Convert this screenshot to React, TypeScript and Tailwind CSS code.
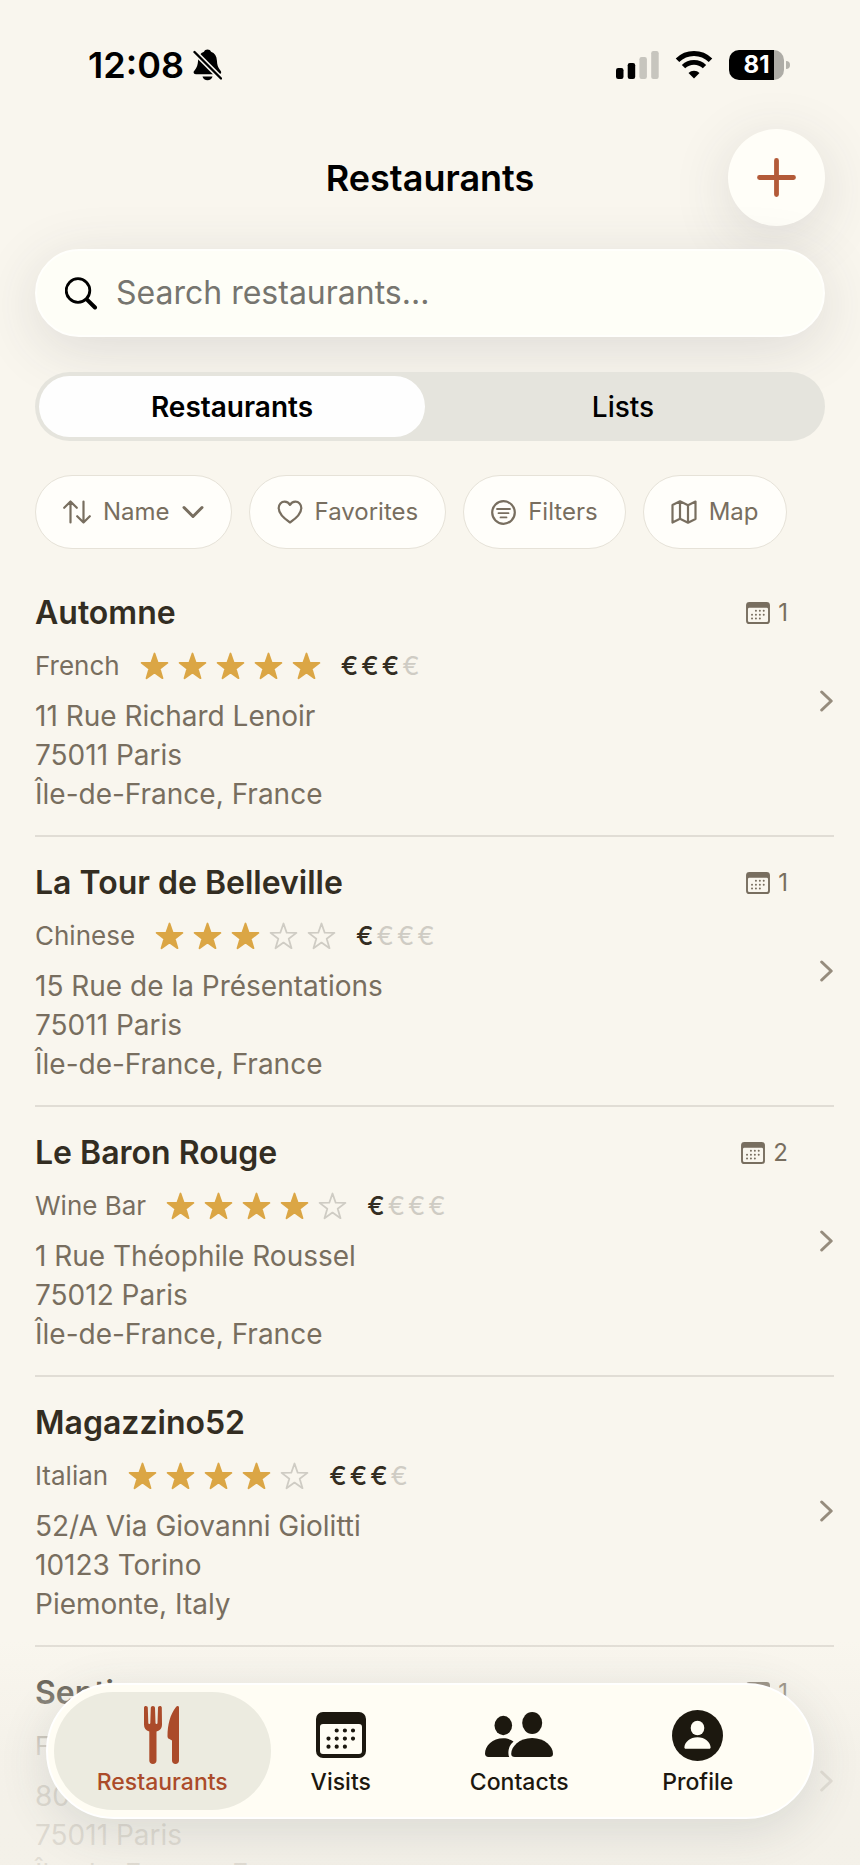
import React, { useState } from 'react'

interface Restaurant {
  name: string
  cuisine: string
  rating: number
  price: number
  address: string[]
  visits?: number
}

const restaurants: Restaurant[] = [
  {
    name: 'Automne',
    cuisine: 'French',
    rating: 5,
    price: 3,
    address: ['11 Rue Richard Lenoir', '75011 Paris', 'Île-de-France, France'],
    visits: 1,
  },
  {
    name: 'La Tour de Belleville',
    cuisine: 'Chinese',
    rating: 3,
    price: 1,
    address: ['15 Rue de la Présentations', '75011 Paris', 'Île-de-France, France'],
    visits: 1,
  },
  {
    name: 'Le Baron Rouge',
    cuisine: 'Wine Bar',
    rating: 4,
    price: 1,
    address: ['1 Rue Théophile Roussel', '75012 Paris', 'Île-de-France, France'],
    visits: 2,
  },
  {
    name: 'Magazzino52',
    cuisine: 'Italian',
    rating: 4,
    price: 3,
    address: ['52/A Via Giovanni Giolitti', '10123 Torino', 'Piemonte, Italy'],
  },
  {
    name: 'Senti',
    cuisine: 'French',
    rating: 4,
    price: 2,
    address: ['80', '75011 Paris', 'Île-de-France, France'],
    visits: 1,
  },
]

/* ---------- icons ---------- */

function BellSlashIcon() {
  return (
    <svg width="29" height="32" viewBox="0 0 29 32" aria-hidden="true">
      <path
        d="M14.5 0.500c1.600 0 3 .9 3.500 2.300 3.800 1.300 5.700 4.500 5.900 8.700.2 4.600 1.100 7.100 3.100 9.400.9 1.100 1.200 1.700 1.200 2.400 0 1.200-.9 2-2.300 2H3c-1.500 0-2.400-.8-2.400-2 0-.8.4-1.400 1.300-2.400 2-2.300 2.900-4.800 3.200-9.400.2-4.200 2.100-7.400 5.900-8.700C11.500 1.400 12.900.5 14.500.5Z"
        fill="#000"
      />
      <path d="M9.500 27.500h10c-.5 2.300-2.500 3.800-5 3.800s-4.500-1.500-5-3.800Z" fill="#000" />
      <path d="M1.500 3 28 29.500" stroke="#f9f6ee" strokeWidth="5.400" />
      <path d="M1.500 3 28 29.500" stroke="#000" strokeWidth="2.400" strokeLinecap="round" />
    </svg>
  )
}

function SignalIcon() {
  return (
    <svg width="43" height="28" viewBox="0 0 43 28" aria-hidden="true">
      <rect x="0" y="17" width="7.500" height="11" rx="2.200" fill="#000" />
      <rect x="11.700" y="12" width="7.500" height="16" rx="2.200" fill="#000" />
      <rect x="23.400" y="6" width="7.500" height="22" rx="2.200" fill="#c7c5be" />
      <rect x="35.200" y="0" width="7.500" height="28" rx="2.200" fill="#c7c5be" />
    </svg>
  )
}

function WifiIcon() {
  return (
    <svg width="38" height="28" viewBox="0 0 38 28" fill="none" aria-hidden="true">
      <path d="M2.500 9.300a23.500 23.500 0 0 1 33 0" stroke="#000" strokeWidth="5" />
      <path d="M8.500 15.600a15 15 0 0 1 21 0" stroke="#000" strokeWidth="4.800" />
      <path d="M19 27.500l-5.500-5.600a7.800 7.800 0 0 1 11 0L19 27.500Z" fill="#000" />
    </svg>
  )
}

function PlusIcon() {
  return (
    <svg width="39" height="39" viewBox="0 0 39 39" aria-hidden="true">
      <path d="M19.500 2.500v34M2.500 19.500h34" stroke="#b35a38" strokeWidth="4.800" strokeLinecap="round" />
    </svg>
  )
}

function SearchIcon() {
  return (
    <svg width="33" height="33" viewBox="0 0 33 33" fill="none" aria-hidden="true">
      <circle cx="13" cy="13.500" r="11.800" stroke="#000" strokeWidth="2.800" />
      <path d="M21.800 22.300 30 30.500" stroke="#000" strokeWidth="4" strokeLinecap="round" />
    </svg>
  )
}

function SortIcon() {
  return (
    <svg width="28" height="24" viewBox="0 0 28 24" fill="none" stroke="currentColor" strokeWidth="2.200" strokeLinecap="round" strokeLinejoin="round" aria-hidden="true">
      <path d="M7.500 22.500v-21M1.200 7.800l6.300-6.300 6.300 6.300" />
      <path d="M20.500 1.500v21M14.200 16.200l6.300 6.300 6.300-6.300" />
    </svg>
  )
}

function ChevronDownIcon() {
  return (
    <svg width="22" height="14" viewBox="0 0 22 14" fill="none" aria-hidden="true">
      <path d="M2 2.500l9 9 9-9" stroke="currentColor" strokeWidth="3" strokeLinecap="round" strokeLinejoin="round" />
    </svg>
  )
}

function HeartIcon() {
  return (
    <svg width="26" height="24" viewBox="0 0 26 24" fill="none" aria-hidden="true">
      <path
        d="M13 22.500C6.800 18.300 1.700 13.400 1.700 8c0-3.700 2.600-6.400 5.900-6.400 2.300 0 4.300 1.200 5.400 3.300 1.100-2.100 3.100-3.300 5.400-3.300 3.300 0 5.900 2.700 5.900 6.400 0 5.400-5.100 10.300-11.300 14.500Z"
        stroke="currentColor"
        strokeWidth="2.200"
        strokeLinejoin="round"
      />
    </svg>
  )
}

function FilterIcon() {
  return (
    <svg width="25" height="25" viewBox="0 0 25 25" fill="none" stroke="currentColor" strokeLinecap="round" aria-hidden="true">
      <circle cx="12.500" cy="12.500" r="11.300" strokeWidth="2.200" />
      <path d="M6 9h13M7.500 13.200h10M9.500 17.400h6" strokeWidth="1.800" />
    </svg>
  )
}

function MapIcon() {
  return (
    <svg width="26" height="24" viewBox="0 0 26 24" fill="none" stroke="currentColor" strokeWidth="2.200" strokeLinejoin="round" aria-hidden="true">
      <path d="M1.500 5 9 1.300l8 4 7.500-3.700v17.500L17 22.700l-8-4-7.500 3.800V5ZM9 1.300v17.400M17 5.300v17.400" />
    </svg>
  )
}

function StarIcon({ filled }: { filled: boolean }) {
  return (
    <svg width="29" height="28" viewBox="0 0 29 28" aria-hidden="true">
      <path
        d="M14.500 1.500 17.700 10.700 27.400 10.900 19.700 16.800 22.500 26.200 14.500 20.600 6.500 26.200 9.300 16.800 1.600 10.900 11.300 10.700Z"
        fill={filled ? '#dba645' : 'none'}
        stroke={filled ? '#dba645' : '#cfccc4'}
        strokeWidth="1.800"
        strokeLinejoin="round"
      />
    </svg>
  )
}

function CalendarIcon({ className }: { className: string }) {
  return (
    <svg viewBox="0 0 50 46" className={className} fill="currentColor" aria-hidden="true">
      <path
        fillRule="evenodd"
        d="M7 0h36a7 7 0 0 1 7 7v32a7 7 0 0 1-7 7H7a7 7 0 0 1-7-7V7a7 7 0 0 1 7-7Zm0 12a3 3 0 0 0-3 3v24a3 3 0 0 0 3 3h36a3 3 0 0 0 3-3V15a3 3 0 0 0-3-3H7Z"
      />
      {/* day dots */}
      <path
        d="M20.700 18.500h0M28.900 18.500h0M37 18.500h0M12.500 26.600h0M20.700 26.600h0M28.900 26.600h0M37 26.600h0M12.500 34.700h0M20.700 34.700h0M28.900 34.700h0"
        stroke="currentColor"
        strokeWidth="4.200"
        strokeLinecap="round"
      />
    </svg>
  )
}

function ChevronRightIcon() {
  return (
    <svg width="14" height="22" viewBox="0 0 14 22" fill="none" aria-hidden="true">
      <path d="M1.700 2l9.500 9-9.500 9" stroke="#968c7d" strokeWidth="3" strokeLinecap="round" strokeLinejoin="round" />
    </svg>
  )
}

function ForkKnifeIcon() {
  return (
    <svg width="36" height="58" viewBox="0 0 36 58" fill="currentColor" aria-hidden="true">
      <path d="M0 1.800C0 .6.800 0 1.900 0s1.900.7 1.900 1.800L4.300 17a1 1 0 0 0 2 0L6.800 2C6.800.7 7.700 0 8.900 0S11 .7 11 2l.5 15a1 1 0 0 0 2 0L14 1.800C14 .7 14.800 0 15.900 0s1.900.6 1.900 1.800L18 18.500c0 3.800-1.700 5.700-5.500 7v29c0 2-1.500 3.500-3.600 3.500s-3.600-1.500-3.600-3.500v-29C1.700 24.200 0 22.300 0 18.500V1.800Z" />
      <path d="M35 1.600v53c0 2-1.500 3.400-3.500 3.400S28 56.600 28 54.600V34.500l-3-1.700c-1.100-.6-1.500-1.500-1.500-2.900C23.600 19 26 8.500 32 1c1.200-1.500 3-1.300 3 .6Z" />
    </svg>
  )
}

function ContactsIcon() {
  return (
    <svg width="68" height="46" viewBox="0 0 68 46" fill="currentColor" aria-hidden="true">
      <ellipse cx="18.300" cy="13.500" rx="8.800" ry="9.700" />
      <ellipse cx="47.200" cy="11" rx="10" ry="11" />
      <path d="M28.500 29.600C24.600 33 23.300 37 23.400 41c0 1.600.2 2.900.8 4H3.500C1.300 45 0 43.800 0 41.600 0 34 7.500 26.300 18.300 26.300c4 0 7.400 1.200 10.200 3.300Z" />
      <path d="M29.800 45c-2.300 0-3.600-1-3.600-3.300 0-7 8-15.700 20.900-15.700S68 34.700 68 41.700c0 2.300-1.300 3.300-3.600 3.300H29.800Z" />
    </svg>
  )
}

function ProfileIcon() {
  return (
    <svg width="51" height="51" viewBox="0 0 51 51" aria-hidden="true">
      <circle cx="25.500" cy="25.500" r="25.500" fill="currentColor" />
      <ellipse cx="25.500" cy="18" rx="6.800" ry="7.300" fill="#fffdf4" />
      <path d="M14 38.800c-1.200 0-1.800-.6-1.600-1.800C13 32 18 27.300 25.500 27.300S38 32 38.600 37c.2 1.200-.4 1.800-1.600 1.800H14Z" fill="#fffdf4" />
    </svg>
  )
}

/* ---------- page parts ---------- */

function StatusBar() {
  return (
    <div className="flex h-[129px] items-center justify-between pl-[88px] pr-[70px]">
      <div className="flex items-center gap-[9px] text-[36px] leading-10 font-semibold text-black">
        <span>12:08</span>
        <BellSlashIcon />
      </div>
      <div className="flex items-center gap-4">
        <SignalIcon />
        <WifiIcon />
        <div className="flex items-center gap-0.5">
          <div className="flex h-[30px] w-[55px] items-center justify-center rounded-[10px] bg-[linear-gradient(to_right,#000_81%,#aeaca6_81%)] text-2xl font-bold text-white">
            81
          </div>
          <div className="h-2 w-1 rounded-r-full bg-[#b5b3ac]" />
        </div>
      </div>
    </div>
  )
}

function FilterButton({ children }: { children: React.ReactNode }) {
  return (
    <button
      type="button"
      className="flex h-[74px] shrink-0 items-center gap-3 rounded-full border border-[#e6e2d8] bg-[#fffefa] px-[27px] text-2xl text-[#786e5f]"
    >
      {children}
    </button>
  )
}

function RestaurantRow({ restaurant }: { restaurant: Restaurant }) {
  return (
    <li className="border-b-2 border-[#e1ddd5]">
      <a href="#" className="flex items-center gap-8">
        <div className="min-w-0 flex-1 pt-7 pb-[21px]">
          <div className="flex h-9 items-center justify-between">
            <h2 className="text-[32px] leading-9 font-semibold text-[#332d22]">{restaurant.name}</h2>
            {restaurant.visits && (
              <span className="flex items-center gap-2 text-2xl text-[#786e5f]">
                <CalendarIcon className="h-[22px] w-6" />
                {restaurant.visits}
              </span>
            )}
          </div>
          <div className="mt-[19px] flex h-8 items-center gap-5">
            <span className="text-[26px] leading-8 text-[#786e5f]">{restaurant.cuisine}</span>
            <span className="flex gap-[9px]">
              {[1, 2, 3, 4, 5].map((n) => (
                <StarIcon key={n} filled={n <= restaurant.rating} />
              ))}
            </span>
            <span className="flex gap-[3px] text-[26px] leading-8">
              {[1, 2, 3, 4].map((n) => (
                <span key={n} className={n <= restaurant.price ? 'font-medium text-[#332d22]' : 'text-[#cfccc4]'}>
                  €
                </span>
              ))}
            </span>
          </div>
          <p className="mt-[15px] text-[28px] leading-[39px] text-[#786e5f]">
            {restaurant.address.map((line) => (
              <span key={line} className="block">
                {line}
              </span>
            ))}
          </p>
        </div>
        <ChevronRightIcon />
      </a>
    </li>
  )
}

function TabBar() {
  const [active, setActive] = useState('Restaurants')
  const tabs = [
    { label: 'Restaurants', icon: <ForkKnifeIcon /> },
    { label: 'Visits', icon: <CalendarIcon className="h-[46px] w-[50px]" /> },
    { label: 'Contacts', icon: <ContactsIcon /> },
    { label: 'Profile', icon: <ProfileIcon /> },
  ]

  return (
    <nav className="absolute inset-x-[46px] bottom-[46px] grid h-[136px] grid-cols-4 rounded-full border-2 border-white bg-[#fffdf4] px-[25px] py-[7px] shadow-[0_12px_50px_rgba(60,70,80,0.14)]">
      {tabs.map((tab) => (
        <button
          key={tab.label}
          type="button"
          onClick={() => setActive(tab.label)}
          className={`-mx-[19px] flex flex-col items-center rounded-full pt-3.5 text-[23px] leading-7 font-medium ${
            active === tab.label ? 'bg-[#ecebe0] text-[#ab4b2a]' : 'text-[#1c180f]'
          }`}
        >
          <span className="flex h-[58px] items-center">{tab.icon}</span>
          <span className="mt-1">{tab.label}</span>
        </button>
      ))}
    </nav>
  )
}

export default function App() {
  const [view, setView] = useState('Restaurants')

  return (
    <div className="relative h-screen overflow-hidden bg-[#f9f6ee] font-['Inter','Liberation_Sans',sans-serif]">
      <div className="h-full overflow-y-auto [scrollbar-width:none]">
        <StatusBar />

        <header className="grid grid-cols-[97px_1fr_97px] items-center px-[35px]">
          <h1 className="col-start-2 text-center text-[36px] leading-10 font-semibold text-black">Restaurants</h1>
          <button
            type="button"
            aria-label="Add restaurant"
            className="flex size-[97px] items-center justify-center rounded-full bg-[#fffef8] shadow-[0_12px_60px_rgba(60,60,70,0.14)]"
          >
            <PlusIcon />
          </button>
        </header>

        {/* search */}
        <div className="mt-[23px] px-[35px]">
          <label className="relative flex h-[88px] items-center gap-[18px] rounded-full border-2 border-[#fffffc] bg-[#fefef7] px-7 shadow-[0_12px_60px_rgba(60,60,70,0.14)]">
            <SearchIcon />
            <input
              type="text"
              aria-label="Search restaurants"
              placeholder="Search restaurants..."
              className="min-w-0 flex-1 bg-transparent text-[32px] leading-10 text-black outline-none placeholder:text-[#76756f]"
            />
          </label>
        </div>

        {/* restaurants / lists switch */}
        <div className="relative mt-[35px] px-[35px]">
          <div className="grid h-[69px] grid-cols-[39fr_40fr] rounded-full bg-[#e5e4dd] p-1 text-[28px] leading-9 text-black">
            {['Restaurants', 'Lists'].map((name) => (
              <button
                key={name}
                type="button"
                onClick={() => setView(name)}
                className={`rounded-full ${view === name ? 'bg-[#fefefe] font-semibold' : 'font-medium'}`}
              >
                {name}
              </button>
            ))}
          </div>
        </div>

        {/* filters */}
        <div className="mt-[34px] flex gap-[17px] px-[35px]">
          <FilterButton>
            <SortIcon />
            Name
            <ChevronDownIcon />
          </FilterButton>
          <FilterButton>
            <HeartIcon />
            Favorites
          </FilterButton>
          <FilterButton>
            <FilterIcon />
            Filters
          </FilterButton>
          <FilterButton>
            <MapIcon />
            Map
          </FilterButton>
        </div>

        <ul className="mt-[18px] pr-[26px] pl-[35px]">
          {restaurants.map((restaurant) => (
            <RestaurantRow key={restaurant.name} restaurant={restaurant} />
          ))}
        </ul>
      </div>

      {/* fades the list out behind the tab bar */}
      <div className="pointer-events-none absolute inset-x-0 bottom-0 h-[225px] bg-linear-to-b from-[#f5f2ea]/0 via-[#f3f0e8]/80 via-50% to-[#f3f0e8]/85" />
      <TabBar />
    </div>
  )
}
